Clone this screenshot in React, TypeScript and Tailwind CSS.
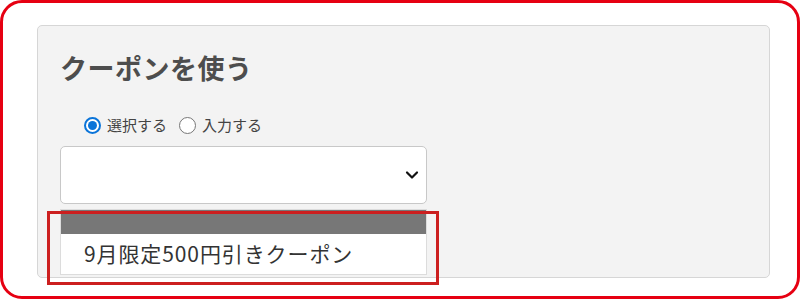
import React from "react";

export default function App() {
  return (
    <div className="relative w-[800px] h-[300px] bg-white" style={{ fontFamily: '"Noto Sans CJK JP", "Noto Sans", sans-serif' }}>
      <div className="w-[800px] h-[299px] border-[3px] border-[#e60012] rounded-[22px] pt-[22px] pl-[34px] pr-[27px]">
        <div className="h-[253px] bg-[#f3f3f3] border border-[#d6d6d6] rounded-[5px] pl-[22px] pt-[24px] flex flex-col">
          <h2 className="text-[27px] leading-[36px] font-bold text-[#4d4d4d] tracking-[0.5px]">クーポンを使う</h2>
          <div className="flex items-center mt-[26px] pl-[24px] h-[26px] text-[15px] text-[#444]">
            <span className="w-[17px] h-[17px] rounded-full border-[2px] border-[#0a74d9] bg-white flex items-center justify-center">
              <span className="w-[9px] h-[9px] rounded-full bg-[#0a74d9]" />
            </span>
            <span className="ml-[6px]">選択する</span>
            <span className="ml-[12px] w-[17px] h-[17px] rounded-full border-[1.5px] border-[#777] bg-white" />
            <span className="ml-[6px]">入力する</span>
          </div>
          <div className="mt-[8px] w-[367px] h-[58px] bg-white border border-[#c8c8c8] rounded-[5px] flex items-center justify-end pr-[6px]">
            <svg width="14" height="10" viewBox="0 0 14 10" className="mr-[1px] mt-[0px]">
              <path d="M2 2.5 L7 7.5 L12 2.5" fill="none" stroke="#111" strokeWidth="2.2" strokeLinecap="round" strokeLinejoin="round" />
            </svg>
          </div>
          <div className="mt-[5px] w-[367px] border border-[#dcdcdc] bg-white">
            <div className="h-[24px] bg-[#777777]" />
            <div className="h-[40px] flex items-center pl-[23px] text-[21px] text-[#333] tracking-[0.9px]">9月限定500円引きクーポン</div>
          </div>
        </div>
      </div>
      <div className="absolute left-[47px] top-[211px] w-[392px] h-[74px] border-[3px] border-[#cc1f1f]" />
    </div>
  );
}
